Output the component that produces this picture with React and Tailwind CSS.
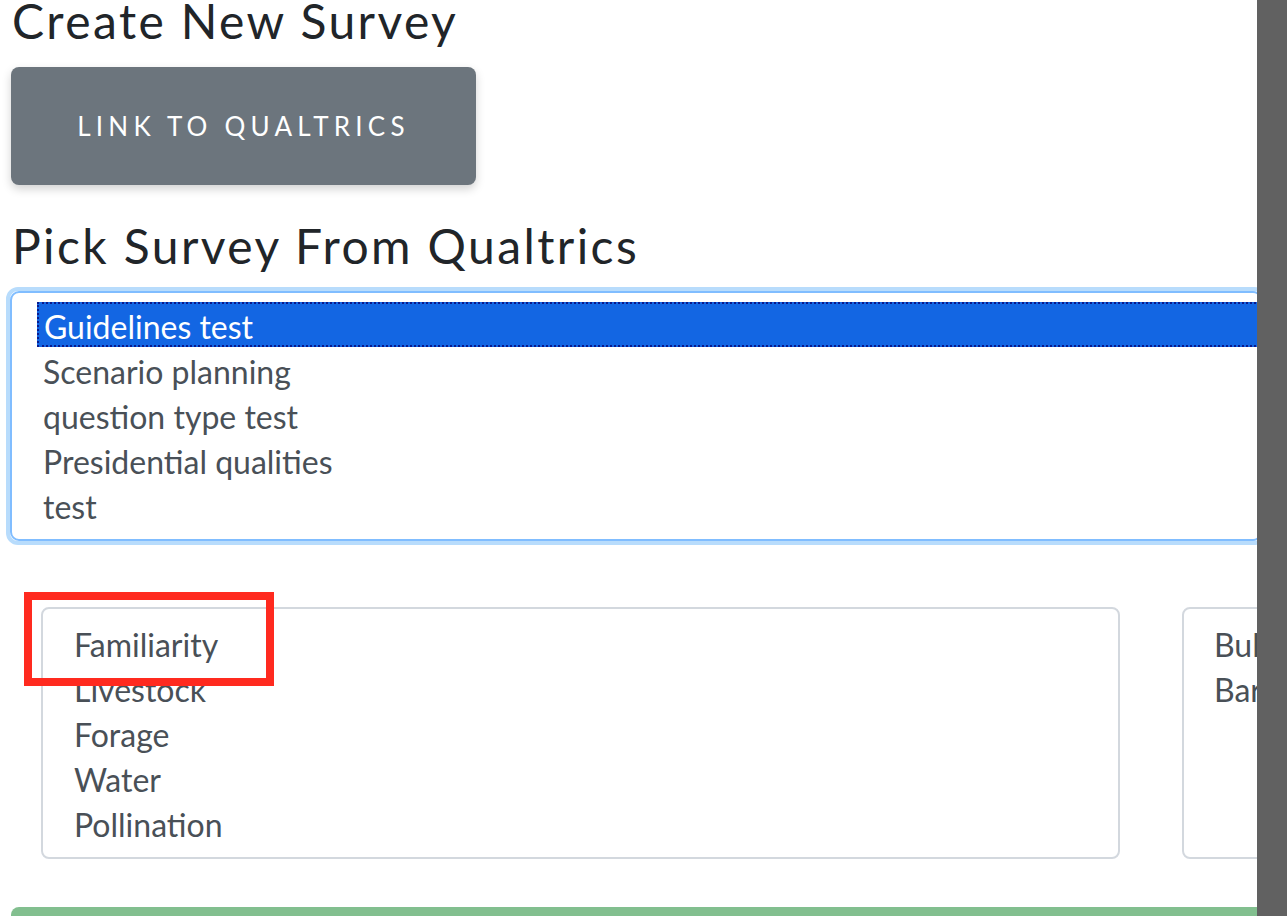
import React from 'react';

const surveys = [
  'Guidelines test',
  'Scenario planning',
  'question type test',
  'Presidential qualities',
  'test',
  'Invasive Species versus Ecosystem Services',
];

const categories = ['Familiarity', 'Livestock', 'Forage', 'Water', 'Pollination'];
const others = ['Bulk', 'Barn'];

const App = () => {
  return (
    <div className="flex h-[916px] w-[1287px] overflow-hidden bg-white font-['Lato',sans-serif]">
      <div className="relative flex-1 overflow-hidden pl-[12px]">
        <h1 className="-mt-[8px] whitespace-nowrap text-[48px] leading-[58px] tracking-[2.4px] text-[#212529]">
          Create New Survey
        </h1>

        <button
          type="button"
          className="-ml-[1px] mt-[17px] flex h-[118px] w-[465px] items-center justify-center rounded-[8px] bg-[#6c757d] text-[26px] uppercase tracking-[0.2em] text-white shadow-[0_4px_10px_rgba(0,0,0,0.18)]"
        >
          Link to Qualtrics
        </button>

        <h2 className="mt-[32px] whitespace-nowrap text-[48px] leading-[58px] tracking-[2.4px] text-[#212529]">
          Pick Survey From Qualtrics
        </h2>

        <div className="-ml-[6px] mt-[12px] h-[258px] w-[1260px] rounded-[12px] border-[4px] border-[#b8dcfc] bg-white">
          <div className="h-full overflow-hidden rounded-[9px] border-[2px] border-[#80bdff] pl-[25px] pt-[9px]">
            {surveys.map((s, i) => (
              <div
                key={s}
                className={
                  i === 0
                    ? 'h-[45px] border-y-[2px] border-l-[2px] border-dotted border-[#0a1a8c] bg-[#1366e3] pl-[5px] text-[32px] leading-[45px] text-white'
                    : 'h-[45px] whitespace-nowrap pl-[6px] text-[32px] leading-[49px] text-[#495057]'
                }
              >
                {s}
              </div>
            ))}
          </div>
        </div>

        <div className="mt-[62px] flex gap-[62px] pl-[29px]">
          <div className="h-[252px] w-[1079px] shrink-0 rounded-[8px] border-[2px] border-[#d3d8de] pl-[31px] pt-[13px]">
            {categories.map((c) => (
              <div key={c} className="h-[45px] text-[32px] leading-[45px] text-[#495057]">
                {c}
              </div>
            ))}
          </div>
          <div className="h-[252px] w-[300px] shrink-0 rounded-[8px] border-[2px] border-[#d3d8de] pl-[30px] pt-[13px]">
            {others.map((c) => (
              <div key={c} className="h-[45px] whitespace-nowrap text-[32px] leading-[45px] text-[#495057]">
                {c}
              </div>
            ))}
          </div>
        </div>

        <div className="-ml-[1px] mt-[48px] h-[40px] w-[1300px] rounded-tl-[8px] bg-[#82bf8f]" />

        <div className="absolute left-[24px] top-[592px] h-[94px] w-[250px] border-[8px] border-[#ff2a1f]" />
      </div>
      <div className="w-[30px] shrink-0 bg-[#616161]" />
    </div>
  );
};

export default App;
